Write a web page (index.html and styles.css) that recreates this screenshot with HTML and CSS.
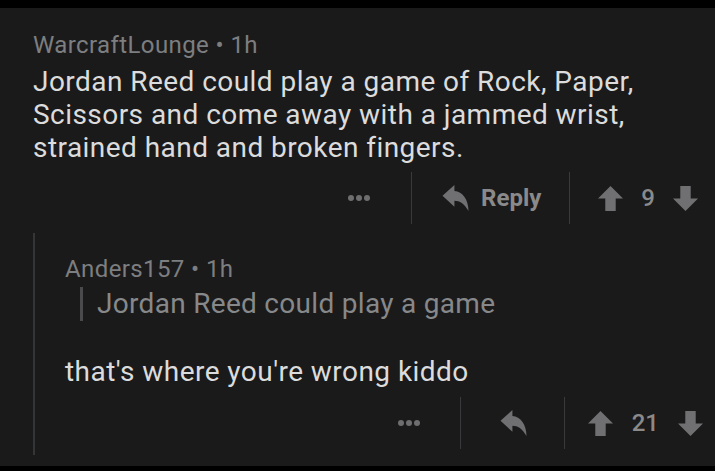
FILE: index.html
```html
<!DOCTYPE html>
<html lang="en">
<head>
    <meta charset="UTF-8">
    <meta name="viewport" content="width=device-width, initial-scale=1.0">
    <title>Comments</title>
    <link rel="stylesheet" href="styles.css">
</head>
<body>
    <div class="card">
        <div class="comment">
            <div class="meta">WarcraftLounge • 1h</div>
            <p class="body">Jordan Reed could play a game of Rock, Paper, Scissors and come away with a jammed wrist, strained hand and broken fingers.</p>
            <div class="actions">
                <div class="more"><span></span><span></span><span></span></div>
                <div class="sep"></div>
                <div class="reply">
                    <svg class="icon-reply" viewBox="0 0 24 24"><path d="M11 0 L0 10 L11 20 V14.5 C16 14.5 20 17 24 24 C24 13.5 18.5 6 11 5.5 Z"/></svg>
                    <span>Reply</span>
                </div>
                <div class="sep"></div>
                <div class="vote">
                    <svg class="icon-vote" viewBox="0 0 24 24"><path d="M12 0 L24 12 H17 V24 H7 V12 H0 Z"/></svg>
                    <span class="score">9</span>
                    <svg class="icon-vote" viewBox="0 0 24 24"><path d="M12 24 L24 12 H17 V0 H7 V12 H0 Z"/></svg>
                </div>
            </div>
        </div>

        <div class="thread">
            <div class="meta">Anders157 • 1h</div>
            <blockquote class="quote">Jordan Reed could play a game</blockquote>
            <p class="body">that's where you're wrong kiddo</p>
            <div class="actions actions-small">
                <div class="more"><span></span><span></span><span></span></div>
                <div class="sep"></div>
                <div class="reply">
                    <svg class="icon-reply" viewBox="0 0 24 24"><path d="M11 0 L0 10 L11 20 V14.5 C16 14.5 20 17 24 24 C24 13.5 18.5 6 11 5.5 Z"/></svg>
                </div>
                <div class="sep"></div>
                <div class="vote">
                    <svg class="icon-vote" viewBox="0 0 24 24"><path d="M12 0 L24 12 H17 V24 H7 V12 H0 Z"/></svg>
                    <span class="score">21</span>
                    <svg class="icon-vote" viewBox="0 0 24 24"><path d="M12 24 L24 12 H17 V0 H7 V12 H0 Z"/></svg>
                </div>
            </div>
        </div>
    </div>
</body>
</html>
```

FILE: styles.css
```css
* {
    margin: 0;
    padding: 0;
    box-sizing: border-box;
}

body {
    background-color: #000;
    font-family: Roboto, "Liberation Sans", sans-serif;
    padding-top: 8px;
    height: 471px;
    overflow: hidden;
}

.card {
    background-color: #1a1a1b;
    height: 458px;
    padding: 23px 0 0 33px;
}

.meta {
    font-size: 24px;
    line-height: 28px;
    letter-spacing: 0.4px;
    color: #7d7e80;
}

.body {
    font-size: 28px;
    line-height: 33px;
    letter-spacing: 0.45px;
    color: #dcdcdc;
    margin-top: 6px;
    padding-right: 40px;
}

.actions {
    display: flex;
    justify-content: flex-end;
    align-items: center;
    height: 52px;
    margin-top: 8px;
    padding-right: 17px;
    color: #8a8a8a;
}

.sep {
    width: 1px;
    height: 52px;
    background-color: #3a3a3c;
}

.more {
    display: flex;
    gap: 2px;
    margin-right: 41px;
}

.more span {
    width: 6px;
    height: 6px;
    border-radius: 50%;
    background-color: #6e6e70;
}

.reply {
    display: flex;
    align-items: center;
    gap: 12px;
    margin: 0 28px 0 30px;
    font-size: 24px;
    font-weight: bold;
}

.icon-reply {
    flex-shrink: 0;
    width: 27px;
    height: 26px;
    fill: #707072;
}

.vote {
    display: flex;
    align-items: center;
    margin-left: 28px;
}

.icon-vote {
    flex-shrink: 0;
    width: 25px;
    height: 25px;
    fill: #707072;
}

.score {
    font-size: 24px;
    font-weight: 500;
    margin: 0 18px;
}

.thread {
    margin-top: 9px;
    border-left: 2px solid #343536;
    padding: 22px 0 6px 30px;
}

.quote {
    margin: 4px 0 0 15px;
    border-left: 3px solid #4a4a4c;
    padding-left: 14px;
    font-size: 28px;
    line-height: 34px;
    letter-spacing: 0.3px;
    color: #87888a;
}

.thread .body {
    margin-top: 34px;
}

.actions-small {
    margin-top: 9px;
    padding-right: 12px;
}

.actions-small .more {
    margin-right: 40px;
}

.actions-small .reply {
    margin: 0 37px 0 39px;
}

.actions-small .vote {
    margin-left: 23px;
}

.actions-small .score {
    margin: 0 19px;
}
```
